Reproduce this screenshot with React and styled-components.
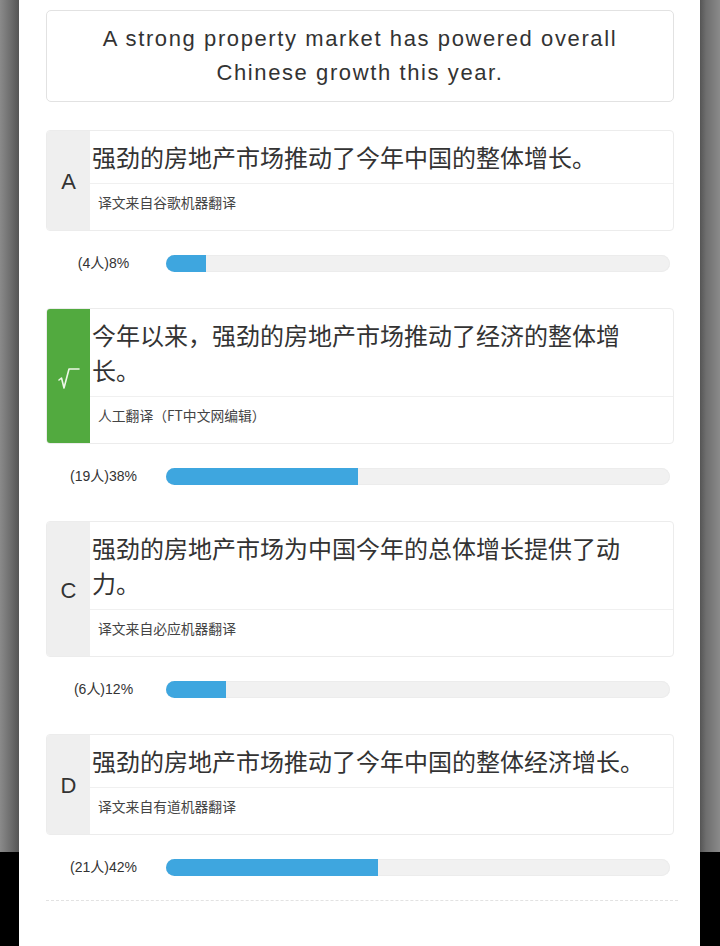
import React from "react";
import styled, { createGlobalStyle } from "styled-components";

const GlobalStyle = createGlobalStyle`
  html, body { margin: 0; padding: 0; }
  html { height: 100%; }
  body {
    min-height: 946px;
    background:
      linear-gradient(to bottom, transparent 0, transparent 852px, #000 852px, #000 100%),
      linear-gradient(to right, #8a8a8a 0, #6a6a6a 12px, #555 19px, #555 700px, #6e6e6e 706px, #8a8a8a 720px);
    font-family: "Liberation Sans", "Noto Sans CJK SC", sans-serif;
    color: #333;
  }
`;

const Panel = styled.main`
  width: 681px;
  margin-left: 19px;
  min-height: 946px;
  box-sizing: border-box;
  background: #fff;
  padding: 10px 26px 0 27px;
  display: flex;
  flex-direction: column;
`;

const Question = styled.div`
  border: 1px solid #e2e2e2;
  border-radius: 5px;
  padding: 11px 20px;
  text-align: center;
  font-family: "Liberation Sans", "Noto Sans CJK SC", sans-serif;
  font-size: 22px;
  letter-spacing: 1.6px;
  line-height: 34px;
  color: #333;
  margin-bottom: 28px;
`;

const Option = styled.section`
  display: flex;
  flex-direction: column;
  & + & { margin-top: 36px; }
`;

const Card = styled.div`
  display: flex;
  border: 1px solid #ececec;
  border-radius: 4px;
  overflow: hidden;
  background: #fff;
`;

const Marker = styled.div`
  width: 43px;
  flex: none;
  display: flex;
  align-items: center;
  justify-content: center;
  padding-top: 3px;
  background: ${(p) => (p.$correct ? "#52aa3f" : "#efefef")};
  font-family: "Liberation Sans", sans-serif;
  font-size: 22px;
  color: #333;
`;

const Body = styled.div`
  flex: 1;
  display: flex;
  flex-direction: column;
  min-width: 0;
`;

const Translation = styled.div`
  padding: 8px 20px 9px 2px;
  font-family: "Noto Sans CJK SC", sans-serif;
  font-size: 24px;
  line-height: 35px;
  color: #333;
  border-bottom: 1px solid #f0f0f0;
`;

const Source = styled.div`
  height: 46px;
  box-sizing: border-box;
  padding: 8px 0 0 8px;
  font-family: "Noto Sans CJK SC", sans-serif;
  font-size: 13.8px;
  line-height: 20px;
  color: #444;
`;

const Stat = styled.div`
  display: flex;
  align-items: center;
  gap: 5px;
  padding-right: 4px;
  margin-top: 24px;
`;

const StatLabel = styled.div`
  width: 115px;
  flex: none;
  text-align: center;
  font-family: "Liberation Sans", "Noto Sans CJK SC", sans-serif;
  font-size: 14px;
  line-height: 17px;
  color: #333;
`;

const Track = styled.div`
  flex: 1;
  height: 17px;
  border-radius: 9px;
  background: #f1f1f1;
  box-shadow: inset 0 0 0 1px #ececec;
  overflow: hidden;
`;

const Fill = styled.div`
  height: 100%;
  background: #3ea6df;
`;

const Dashed = styled.hr`
  margin: 24px -4px 0 0;
  border: none;
  border-top: 1px dashed #e2e2e2;
  height: 0;
`;

const Check = () => (
  <svg width="26" height="26" viewBox="0 0 26 26" fill="none">
    <path
      d="M3 15 L5.5 13 L8 23 L13 4 L23 4"
      stroke="#eef7e8"
      strokeWidth="1.6"
      strokeLinejoin="round"
      strokeLinecap="round"
    />
  </svg>
);

const options = [
  { key: "A", text: "强劲的房地产市场推动了今年中国的整体增长。", source: "译文来自谷歌机器翻译", count: 4, pct: 8 },
  { key: "B", text: "今年以来，强劲的房地产市场推动了经济的整体增长。", source: "人工翻译（FT中文网编辑）", count: 19, pct: 38, correct: true },
  { key: "C", text: "强劲的房地产市场为中国今年的总体增长提供了动力。", source: "译文来自必应机器翻译", count: 6, pct: 12 },
  { key: "D", text: "强劲的房地产市场推动了今年中国的整体经济增长。", source: "译文来自有道机器翻译", count: 21, pct: 42 },
];

export default function App() {
  return (
    <>
      <GlobalStyle />
      <Panel>
        <Question>
          A strong property market has powered overall
          <br />
          Chinese growth this year.
        </Question>
        {options.map((o) => (
          <Option key={o.key}>
            <Card>
              <Marker $correct={o.correct}>{o.correct ? <Check /> : o.key}</Marker>
              <Body>
                <Translation>{o.text}</Translation>
                <Source>{o.source}</Source>
              </Body>
            </Card>
            <Stat>
              <StatLabel>({o.count}人){o.pct}%</StatLabel>
              <Track>
                <Fill style={{ width: `${o.pct}%` }} />
              </Track>
            </Stat>
          </Option>
        ))}
        <Dashed />
      </Panel>
    </>
  );
}
